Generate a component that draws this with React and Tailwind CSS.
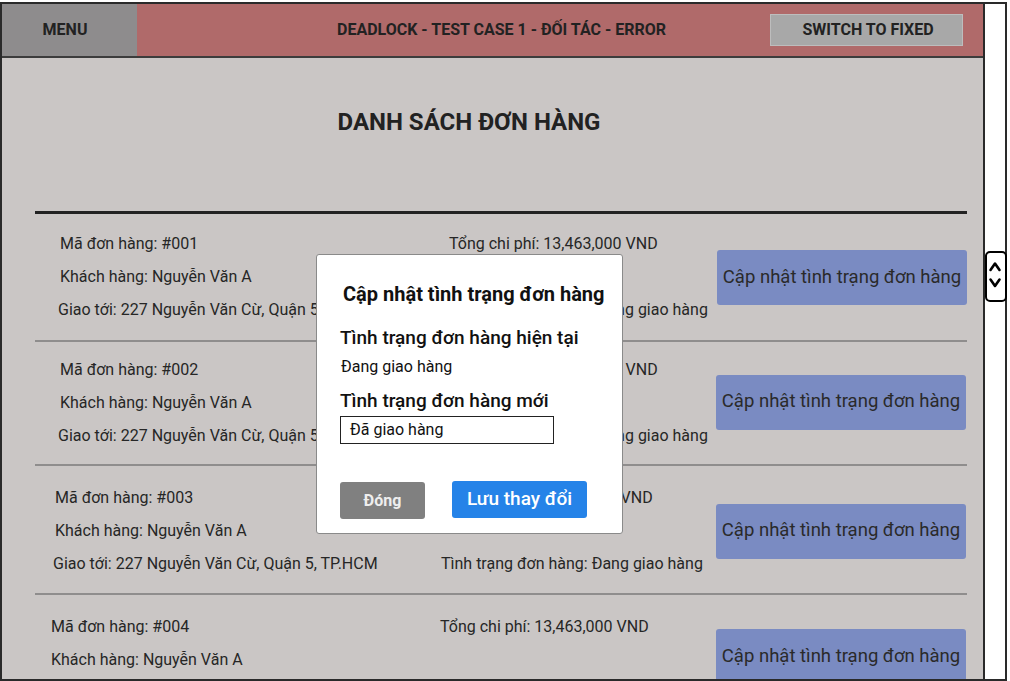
import React from "react";

const rows = [
  { id: "#001", pt: "pt-[13px]", pb: "pb-[14px]", pl: "pl-[25px]", btn: "mr-0 mt-[2px]" },
  { id: "#002", pt: "pt-[11px]", pb: "pb-[12px]", pl: "pl-[25px]", btn: "mr-[1px] -mt-[1px]" },
  { id: "#003", pt: "pt-[15px]", pb: "pb-[13px]", pl: "pl-[20px]", btn: "mr-[1px] mt-[1px]" },
  { id: "#004", pt: "pt-[15px]", pb: "pb-[14px]", pl: "pl-[16px]", btn: "mr-[1px] -mt-[6px]" },
];

function Row({ r, last }) {
  return (
    <div>
      <div className={`flex items-center ${r.pt} ${r.pb} ${r.pl}`}>
        <div className="w-[389px] flex flex-col text-[16px] text-[#262626]">
          <div className="h-[33px] flex items-center">Mã đơn hàng: {r.id}</div>
          <div className="h-[33px] flex items-center">Khách hàng: Nguyễn Văn A</div>
          <div className="h-[33px] flex items-center -ml-[2px]">Giao tới: 227 Nguyễn Văn Cừ, Quận 5, TP.HCM</div>
        </div>
        <div className="flex-1 flex flex-col text-[16px] text-[#262626]">
          <div className="h-[33px] flex items-center">Tổng chi phí: 13,463,000 VND</div>
          <div className="h-[33px]"></div>
          <div className="h-[33px] flex items-center -ml-[3px]">Tình trạng đơn hàng: Đang giao hàng</div>
        </div>
        <div className={`w-[250px] h-[55px] shrink-0 bg-[#7a8bc2] rounded-[3px] flex items-center justify-center text-[18.5px] text-[#2a2a2a] ${r.btn}`}>
          Cập nhật tình trạng đơn hàng
        </div>
      </div>
      {!last && <div className="h-[2px] bg-[#8f8d8d]"></div>}
    </div>
  );
}

export default function App() {
  return (
    <div className="relative w-[1010px] h-[681px] bg-white pt-[2px] flex font-['Roboto',sans-serif] overflow-hidden">
      <div className="w-[985px] h-[679px] border-2 border-[#2a2a2a] flex flex-col overflow-hidden">
        <div className="h-[54px] shrink-0 border-b-2 border-[#3c3c3c] flex">
          <div className="w-[135px] bg-[#8e8c8d] flex items-center justify-center pr-[9px] text-[16px] font-bold text-[#222]">
            MENU
          </div>
          <div className="flex-1 bg-[#b06a6a] flex items-center pl-[200px] pr-[20px]">
            <div className="text-[16px] font-bold text-[#222]">DEADLOCK - TEST CASE 1 - ĐỐI TÁC - ERROR</div>
            <div className="ml-auto w-[193px] h-[32px] bg-[#a8a8a8] border border-[#bdbdbd] flex items-center justify-center pl-[3px] text-[16px] font-bold text-[#222]">
              SWITCH TO FIXED
            </div>
          </div>
        </div>
        <div className="flex-1 bg-[#cac6c5] pl-[33px] pr-[16px]">
          <div className="pt-[48px] pr-[64px] text-center text-[24px] leading-[32px] font-bold text-[#222]">
            DANH SÁCH ĐƠN HÀNG
          </div>
          <div className="mt-[73px] h-[3px] bg-[#222]"></div>
          {rows.map((r, i) => (
            <Row key={r.id} r={r} last={i === rows.length - 1} />
          ))}
        </div>
      </div>
      <div className="relative w-[22px] h-[679px] border-y-2 border-r-2 border-[#2a2a2a] bg-white">
        <div className="absolute left-0 top-[247px] w-[22px] h-[51px] border-[2.5px] border-black rounded-[5px] bg-white">
          <svg width="17" height="46" viewBox="0 0 17 46" fill="none" stroke="black" strokeWidth="2.6" strokeLinecap="round" strokeLinejoin="round">
            <polyline points="3.5,17 8,10.5 12.5,17" />
            <polyline points="3.5,26.5 8,33 12.5,26.5" />
          </svg>
        </div>
      </div>

      <div className="absolute left-[316px] top-[254px] w-[307px] h-[280px] bg-white border border-[#8a8a8a] rounded-[3px] pl-[23px]">
        <div className="pt-[26px] pl-[3px] text-[20px] leading-[26px] font-bold text-[#111]">
          Cập nhật tình trạng đơn hàng
        </div>
        <div className="mt-[18px] text-[19px] leading-[26px] font-medium text-[#111]">
          Tình trạng đơn hàng hiện tại
        </div>
        <div className="mt-[6px] pl-[1px] text-[16px] leading-[20px] text-[#111]">Đang giao hàng</div>
        <div className="mt-[11px] text-[19px] leading-[26px] font-medium text-[#111]">
          Tình trạng đơn hàng mới
        </div>
        <div className="mt-[2px] w-[214px] h-[28px] border-[1.5px] border-[#222] flex items-center pl-[9px] text-[16px] text-[#111]">
          Đã giao hàng
        </div>
        <div className="mt-[38px] flex items-start gap-[27px]">
          <div className="w-[85px] h-[37px] bg-[#808080] rounded-[3px] flex items-center justify-center text-[16px] font-bold text-[#eeeeee]">
            Đóng
          </div>
          <div className="-mt-[1px] w-[135px] h-[37px] bg-[#2583e8] rounded-[3px] flex items-center justify-center text-[19px] font-medium text-white">
            Lưu thay đổi
          </div>
        </div>
      </div>
    </div>
  );
}
